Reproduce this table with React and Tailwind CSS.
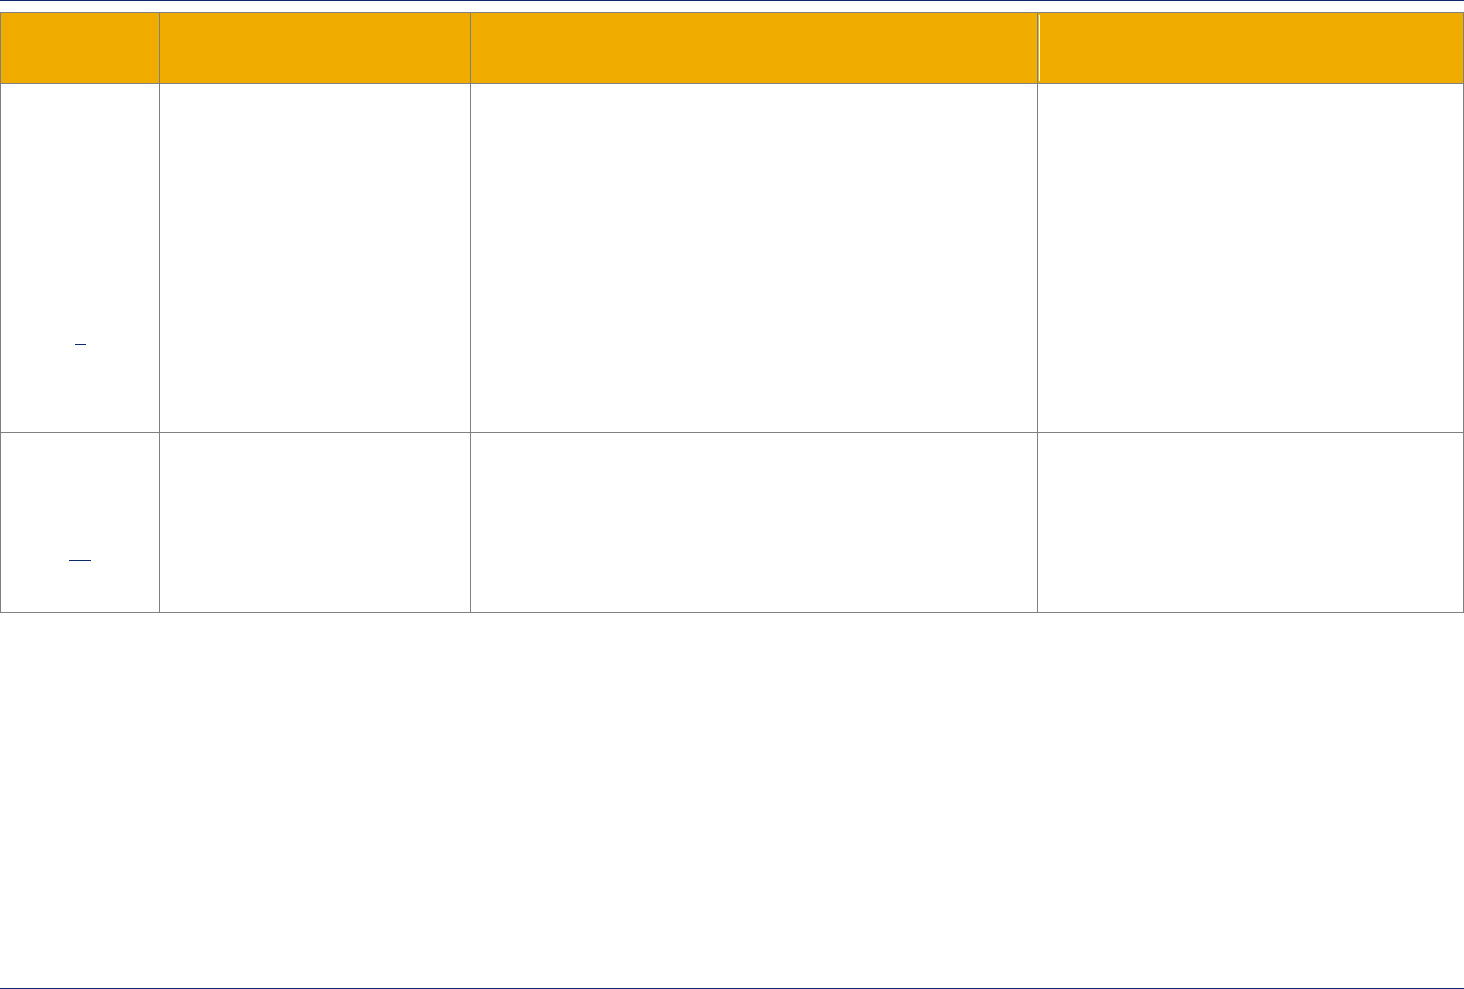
import React from "react";

const widths = ["w-[159px]", "w-[311px]", "w-[567px]", "w-[426px]"];

function Row({ height, children }) {
  return <div className={`flex ${height}`}>{children}</div>;
}

export default function App() {
  return (
    <div className="h-[989px] flex flex-col bg-white" style={{ fontFamily: '"Liberation Sans", Arial, sans-serif' }}>
      <div className="h-px bg-[#0d2a6e]" />

      <div className="mt-[11px] border-l border-t border-[#808080] w-[1464px]">
        {/* header */}
        <div className="flex h-[71px] bg-[#f0ad00]">
          <div className="w-[159px] border-r border-b border-[#808080]" />
          <div className="w-[311px] border-r border-b border-[#808080]" />
          <div className="w-[567px] border-r border-b border-[#808080]" />
          <div className="w-[426px] border-r border-b border-[#808080] flex">
            <div className="ml-px mt-[2px] mb-[2px] border-l border-white" />
          </div>
        </div>

        {/* row 1 */}
        <div className="flex h-[349px]">
          <div className="w-[159px] border-r border-b border-[#808080] flex flex-col items-center pt-[260px]">
            <a className="block w-[11px] h-px bg-[#0d2a6e]" href="#" />
          </div>
          <div className="w-[311px] border-r border-b border-[#808080]" />
          <div className="w-[567px] border-r border-b border-[#808080]" />
          <div className="w-[426px] border-r border-b border-[#808080]" />
        </div>

        {/* row 2 */}
        <div className="flex h-[180px]">
          <div className="w-[159px] border-r border-b border-[#808080] flex flex-col items-center pt-[127px]">
            <a className="block w-[22px] h-px bg-[#0d2a6e]" href="#" />
          </div>
          <div className="w-[311px] border-r border-b border-[#808080]" />
          <div className="w-[567px] border-r border-b border-[#808080]" />
          <div className="w-[426px] border-r border-b border-[#808080]" />
        </div>
      </div>

      <div className="flex-1" />
      <div className="h-px bg-[#0d2a6e]" />
    </div>
  );
}
